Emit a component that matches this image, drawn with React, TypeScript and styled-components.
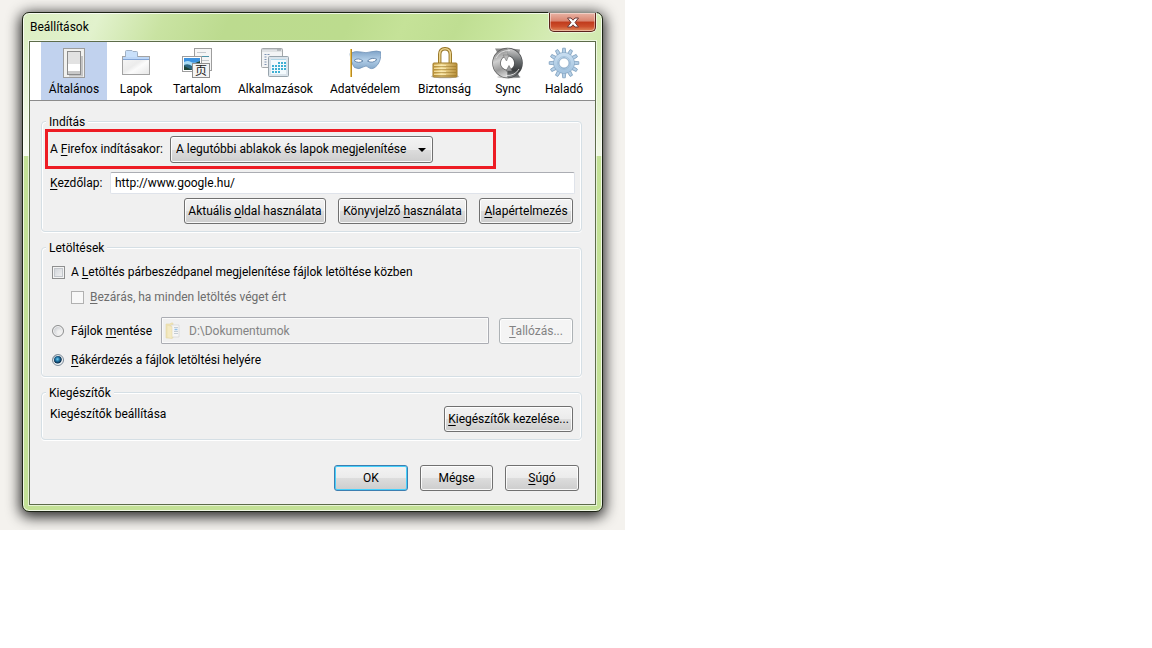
import React, { useState } from "react";
import styled, { createGlobalStyle, css } from "styled-components";

const GlobalStyle = createGlobalStyle`
  *, *::before, *::after { box-sizing: border-box; }
  body {
    margin: 0;
    background: #fff;
    color: #000;
    font: 12px/16px Roboto, "Noto Sans", sans-serif;
  }
  button, input, select { font: inherit; color: inherit; }
  u { text-underline-offset: 2px; }
`;

const Desktop = styled.main`
  width: 100%;
  max-width: 625px;
  padding: 12px 22px 18px;
  background: #f4f2ee;
  overflow: hidden;
`;

const Window = styled.section`
  padding: 0 6px 6px;
  border: 1px solid #1d2416;
  border-radius: 7px;
  background:
    linear-gradient(to bottom, transparent 28px, rgba(255, 255, 255, 0.7) 143px, transparent 143px),
    linear-gradient(115deg, #dcefc2 0, #e2f2cd 70px, #c9e3a2 130px, #bcdb8f 190px, #bcdc8e 300px, #c5e298 350px, #bfde92 400px, #c8e59e 440px, #d8edba 500px, #cde7a8 560px) top / 100% 143px no-repeat,
    #c3e196;
  box-shadow:
    inset 0 0 0 1px rgba(255, 255, 255, 0.75),
    0 3px 14px 2px rgba(0, 0, 0, 0.85);
`;

const TitleBar = styled.header`
  display: flex;
  align-items: flex-start;
  justify-content: space-between;
  height: 28px;
  padding-left: 1px;
`;

const Title = styled.h1`
  margin: 6px 0 0;
  font-size: 12px;
  font-weight: 400;
  line-height: 16px;
`;

const CloseButton = styled.button`
  display: grid;
  place-items: center;
  width: 47px;
  height: 19px;
  padding: 0;
  border: 1px solid #5b211b;
  border-top: 0;
  border-radius: 0 0 5px 5px;
  background: linear-gradient(#e9b3a4 0, #d98570 45%, #c03a1c 50%, #cc4f2c 75%, #e08a5c 100%);
  box-shadow: inset 0 0 0 1px rgba(255, 255, 255, 0.4), 0 0 0 1px rgba(255, 255, 255, 0.5);
`;

const Client = styled.div`
  border: 1px solid #5d6c4a;
  outline: 1px solid rgba(255, 255, 255, 0.6);
  background: #f0f0f0;
`;

const Toolbar = styled.nav`
  display: grid;
  grid-template-columns: 66fr 58fr 64fr 93fr 86fr 73fr 54fr 58fr;
  padding: 0 2px 0 11px;
  border-bottom: 1px solid #8c8c8c;
  background: #fff;
`;

const Tab = styled.button<{ $active?: boolean }>`
  display: flex;
  flex-direction: column;
  align-items: center;
  gap: 2px;
  height: 58px;
  padding: 5px 0 0;
  border: 0;
  white-space: nowrap;
  background: ${(p) => (p.$active ? "#c1d2ee" : "transparent")};
`;

const Pane = styled.form`
  padding: 12px 13px 13px 11px;
`;

const Group = styled.fieldset`
  min-width: 0;
  margin: 0 0 7px;
  padding: 0 6px 7px 3px;
  border: 1px solid #d5dfe5;
  border-radius: 4px;
  box-shadow: inset 1px 1px 0 #fff, inset -1px 0 0 #fff, 0 1px 0 #fff;
`;

const DownloadsGroup = styled(Group)`
  padding-bottom: 8px;
`;

const Legend = styled.legend`
  margin: 0 0 0 1px;
  padding: 1px 3px 0;
  line-height: 16px;
  background: #f0f0f0;
`;

const HighlightedRow = styled.div`
  display: flex;
  align-items: center;
  gap: 8px;
  width: 451px;
  max-width: 100%;
  height: 40px;
  margin-top: -1px;
  padding-left: 2px;
  border: 3px solid #ed1c24;
`;

const StartupLabel = styled.label`
  width: 112px;
  white-space: nowrap;
`;

const buttonFace = css`
  border: 1px solid #707070;
  border-radius: 3px;
  background: linear-gradient(#f3f3f3 0, #ebebeb 50%, #dddddd 50%, #cdcdcd 100%);
  box-shadow: inset 0 0 0 1px rgba(255, 255, 255, 0.85);
`;

const SelectWrap = styled.span`
  position: relative;
  display: inline-flex;
  width: 263px;
`;

const Select = styled.select`
  ${buttonFace}
  appearance: none;
  width: 100%;
  height: 27px;
  padding: 0 20px 0 5px;
`;

const SelectArrow = styled.svg`
  position: absolute;
  right: 7px;
  top: 12px;
  pointer-events: none;
`;

const HomeRow = styled.div`
  display: flex;
  align-items: center;
  margin-top: 3px;
  padding-left: 5px;
`;

const HomeLabel = styled.label`
  width: 60px;
`;

const TextBox = styled.input`
  flex: 1;
  min-width: 0;
  height: 22px;
  padding: 0 4px;
  border: 1px solid #dfe3ea;
  border-top-color: #abadb3;
  border-radius: 2px;
  background: #fff;
`;

const ButtonRow = styled.div`
  display: flex;
  justify-content: flex-end;
  gap: 12px;
  margin-top: 4px;
  padding-right: 2px;
`;

const Button = styled.button<{ $width: number; $primary?: boolean }>`
  ${buttonFace}
  flex: none;
  width: ${(p) => p.$width}px;
  height: 26px;
  padding: 0;
  white-space: nowrap;
  ${(p) =>
    p.$primary &&
    css`
      border-color: #3c7fb1;
      box-shadow: inset 0 0 0 1px #46d0fb;
    `}
  &:disabled {
    border-color: #adb2b5;
    background: #f4f4f4;
    color: #838383;
  }
`;

const OptionRow = styled.div<{ $gap: number; $indent?: boolean; $disabled?: boolean }>`
  display: flex;
  align-items: center;
  gap: 6px;
  margin-top: ${(p) => p.$gap}px;
  padding-left: ${(p) => (p.$indent ? 26 : 7)}px;
  padding-right: 2px;
  color: ${(p) => (p.$disabled ? "#6d6d6d" : "inherit")};
`;

const CheckBox = styled.input.attrs({ type: "checkbox" })`
  appearance: none;
  flex: none;
  width: 13px;
  height: 13px;
  margin: 0;
  border: 1px solid #8e8f8f;
  background: linear-gradient(135deg, #cbcfd5, #f6f6f6) padding-box;
  box-shadow: inset 0 0 0 1px #f4f4f4, inset 0 0 0 2px #c3c7cc;
  &:checked { background: #2a6f9e; }
  &:disabled {
    border-color: #b1b1b1;
    background: #f8f8f8;
    box-shadow: none;
  }
`;

const Radio = styled.input.attrs({ type: "radio" })`
  appearance: none;
  flex: none;
  width: 12px;
  height: 12px;
  margin: 0 1px 0 0;
  border: 1px solid #8e8f8f;
  border-radius: 50%;
  background: radial-gradient(circle at 65% 65%, #f0f0f0 20%, #b4b9c0 100%);
  box-shadow: inset 0 0 0 1px #f4f4f4;
  &:checked {
    border-color: #7d8b98;
    background: radial-gradient(circle at 45% 42%, #6fd0f5 0, #1b6b9b 28%, #0c2f4e 48%, #e4ebf0 60%);
  }
`;

const SaveLabel = styled.label`
  width: 84px;
  white-space: nowrap;
`;

const PathField = styled.div`
  display: flex;
  flex: 1;
  align-items: center;
  gap: 8px;
  min-width: 0;
  height: 27px;
  margin-right: 4px;
  padding-left: 3px;
  border: 1px solid #abadb3;
  border-radius: 1px;
  box-shadow: inset 0 0 0 1px #fafafa;
`;

const PathInput = styled.input`
  flex: 1;
  min-width: 0;
  padding: 0;
  border: 0;
  background: transparent;
  color: #838383;
`;

const AddonsRow = styled.div`
  display: flex;
  align-items: flex-start;
  justify-content: space-between;
  margin-top: 5px;
  padding: 0 2px 0 5px;
`;

const DialogButtons = styled.footer`
  display: flex;
  justify-content: flex-end;
  gap: 12px;
  margin-top: 25px;
  padding-right: 3px;
`;

const Icon = ({ children }: { children: React.ReactNode }) => (
  <svg width="32" height="32" viewBox="0 0 32 32" aria-hidden="true">
    {children}
  </svg>
);

const GeneralIcon = () => (
  <Icon>
    <rect x="5.5" y="1.5" width="21" height="29" fill="#f1f1ef" stroke="#9c9c9c" />
    <path d="M11 28.5h13V9" fill="none" stroke="#c4c4c4" strokeWidth="2" />
    <rect x="9.5" y="4.5" width="13" height="23" fill="#e2e2e2" stroke="#8b8b8b" />
    <path d="M10 17h12v7H10z" fill="#fff" />
    <path d="M10 24h12v3H10z" fill="#c9c9c9" />
  </Icon>
);

const TabsIcon = () => (
  <Icon>
    <defs>
      <linearGradient id="page" x1="0" y1="0" x2="1" y2="1">
        <stop offset="0" stopColor="#f8f8f8" />
        <stop offset=".45" stopColor="#ececec" />
        <stop offset=".6" stopColor="#fbfbfb" />
        <stop offset="1" stopColor="#e6e6e6" />
      </linearGradient>
    </defs>
    <rect x="2.5" y="9.5" width="27" height="18" fill="url(#page)" stroke="#a3a3a3" />
    <path d="M5.5 12V4.5q0-1 1-1h5.5l1 1h3.5q1 0 1 1V12z" fill="#c9e0fa" stroke="#9fb0c4" />
    <path d="M3 10h26v2.5H3z" fill="#bdd7f7" />
    <path d="M3 12.5h26" stroke="#83a5d6" />
  </Icon>
);

const ContentIcon = () => (
  <Icon>
    <rect x="13.5" y="1.5" width="17" height="22" fill="#f5f5f5" stroke="#9d9d9d" />
    <path d="M16 5.5h9M16 13.5h12M20 17.5h8" stroke="#c4c8cc" />
    <path d="M16 9.5h12" stroke="#4c93a8" />
    <rect x="1.5" y="9.5" width="19" height="15" fill="#fff" stroke="#9d9d9d" />
    <path d="M3 11h16v12H3z" fill="#3c92e0" />
    <path d="M3 15q4-2 7 0t9-1v5H3z" fill="#a9dcf5" />
    <path d="M3 18q4-2 8 1l8-2v6H3z" fill="#2c6680" />
    <path d="M3 19l8 4H3zM14 16l5-2v5z" fill="#1c4335" />
    <rect x="11.5" y="16.5" width="17" height="14" fill="#f4f4f4" stroke="#8f8f8f" />
    <text x="20" y="28" fontSize="12" textAnchor="middle" fontFamily="'Noto Sans CJK SC', sans-serif" fill="#222">
      页
    </text>
  </Icon>
);

const AppsIcon = () => (
  <Icon>
    <rect x="1.5" y="1.5" width="21" height="19" rx="1" fill="#f3f4f5" stroke="#a4a8aa" />
    <path d="M2 2.5h20M2 4h20" stroke="#cdd1d4" />
    <path d="M17 3h4" stroke="#8e9498" />
    <path d="M4.5 7.5h6M4.5 10h3M4.5 12.5h3M4.5 15h3M4.5 17.5h3" stroke="#7f95b3" strokeDasharray="2 1" />
    <rect x="8.5" y="9.5" width="20" height="20" rx="1" fill="#dbe4eb" stroke="#98a4ac" />
    <path d="M11 12h15v15H11z" fill="#f4fafd" />
    <path d="M11 12.5h15" stroke="#b2d7e8" />
    <path d="M18 16h8M12 19h14M12 22h14M12 25h9" stroke="#3fafd3" strokeWidth="2" strokeDasharray="2 1" />
  </Icon>
);

const MaskIcon = () => (
  <Icon>
    <defs>
      <linearGradient id="mask" x1="0" y1="0" x2="0" y2="1">
        <stop offset="0" stopColor="#7fa3c8" />
        <stop offset=".5" stopColor="#b3cfe8" />
        <stop offset="1" stopColor="#86a9cb" />
      </linearGradient>
    </defs>
    <path
      d="M1 6.5Q6 3.5 12 5Q17 6.5 22 4.8Q28 3.2 32 5Q32 14 28 18.5Q24 23 20.5 21Q17 17.5 14 20Q10 23 5.5 20.5Q2 16 1 6.5Z"
      fill="url(#mask)"
      stroke="#6d91b6"
      strokeWidth=".8"
    />
    <path d="M5 13.500Q9 10 14 14Q9.500 17 5 13.500ZM18.500 14Q23 9.500 28 12.500Q23.500 17 18.500 14Z" fill="#fff" stroke="#5b7ea5" strokeWidth=".9" />
    <path d="M2 2v28" stroke="#b98a22" strokeWidth="2" />
    <path d="M1.5 2v28" stroke="#ecc65e" />
  </Icon>
);

const LockIcon = () => (
  <Icon>
    <defs>
      <linearGradient id="brass" x1="0" y1="0" x2="1" y2="0">
        <stop offset="0" stopColor="#cfa64a" />
        <stop offset=".35" stopColor="#f3dd98" />
        <stop offset="1" stopColor="#b88f3a" />
      </linearGradient>
    </defs>
    <ellipse cx="16" cy="29.5" rx="14" ry="1.8" fill="#bdbdbd" />
    <path d="M10.7 17V7.5Q10.7 1.8 16 1.8T21.3 7.5V17" fill="none" stroke="#93701f" strokeWidth="3.4" />
    <path d="M10.7 17V7.5Q10.7 1.8 16 1.8T21.3 7.5V17" fill="none" stroke="#ead28c" strokeWidth="1.6" />
    <rect x="4" y="16" width="24" height="14" rx="1" fill="url(#brass)" stroke="#a07b28" />
    <path d="M5 19.5h22M5 22.5h22M5 25.5h22M5 28.5h22" stroke="#8f6a1d" strokeOpacity=".45" />
    <path d="M5 18.5h12M5 21.5h12M5 24.5h12M5 27.5h12" stroke="#fff2bf" strokeOpacity=".6" />
  </Icon>
);

const SyncIcon = () => (
  <Icon>
    <defs>
      <linearGradient id="steelLight" gradientUnits="userSpaceOnUse" x1="4" y1="2" x2="14" y2="30">
        <stop offset="0" stopColor="#777" />
        <stop offset=".4" stopColor="#cfcfcf" />
        <stop offset=".7" stopColor="#9a9a9a" />
        <stop offset="1" stopColor="#dedede" />
      </linearGradient>
      <linearGradient id="steelDark" gradientUnits="userSpaceOnUse" x1="22" y1="3" x2="20" y2="30">
        <stop offset="0" stopColor="#c4c4c4" />
        <stop offset=".4" stopColor="#6a6e70" />
        <stop offset=".75" stopColor="#393c3e" />
        <stop offset="1" stopColor="#828587" />
      </linearGradient>
    </defs>
    <ellipse cx="17" cy="30" rx="12" ry="1.5" fill="#c9c9c9" />
    <path d="M3 1.500H12L6 7ZM19 1.500L28 2.500L27 8Z" fill="#8c8c8c" />
    <path d="M28 30.500H19L25 25Z" fill="#6f7274" />
    <path d="M15.500 5A11 11 0 0 0 15.500 27" fill="none" stroke="#5e5e5e" strokeWidth="8.600" />
    <path d="M15.500 5A11 11 0 0 1 15.500 27" fill="none" stroke="#4b4d4f" strokeWidth="8.600" />
    <path d="M15.500 5A11 11 0 0 0 15.500 27" fill="none" stroke="url(#steelLight)" strokeWidth="7.200" />
    <path d="M15.500 5A11 11 0 0 1 15.500 27" fill="none" stroke="url(#steelDark)" strokeWidth="7.200" />
    <path d="M11 8L14.500 14L17 8Z" fill="#b9b9b9" stroke="#777" strokeWidth=".6" />
    <path d="M20 24L17 18.500L14 24Z" fill="#9a9c9e" stroke="#666" strokeWidth=".6" />
    <path d="M4 11Q8 3 18 3.500M27 22Q23 29 14 28.500" fill="none" stroke="#e4e4e4" strokeWidth=".9" />
  </Icon>
);

const GEAR_TEETH = Array.from({ length: 12 }, (_, i) => i * 30);

const GearIcon = () => (
  <Icon>
    <defs>
      <linearGradient id="gear" x1="0" y1="0" x2="0" y2="1">
        <stop offset="0" stopColor="#c6dcef" />
        <stop offset="1" stopColor="#a6c5e0" />
      </linearGradient>
    </defs>
    {GEAR_TEETH.map((angle) => (
      <path
        key={angle}
        d="M14.200 7L14.700 1.200H17.300L17.800 7Z"
        fill="#b5cfe6"
        stroke="#7e9fbe"
        strokeWidth=".8"
        transform={`rotate(${angle} 16 16)`}
      />
    ))}
    <circle cx="16" cy="16" r="7.8" fill="none" stroke="#86a6c4" strokeWidth="5.8" />
    <circle cx="16" cy="16" r="7.8" fill="none" stroke="url(#gear)" strokeWidth="4.8" />
    <circle cx="16" cy="16" r="6.4" fill="none" stroke="#98b7d3" strokeWidth=".7" />
    <circle cx="16" cy="16" r="5" fill="#fff" stroke="#86a6c4" strokeWidth=".8" />
  </Icon>
);

const FolderIcon = () => (
  <svg width="16" height="18" viewBox="0 0 16 18" aria-hidden="true" opacity=".6">
    <path d="M1 2h4l1-1h2v15H1z" fill="#f1dc8c" stroke="#e3cc7c" strokeWidth=".6" />
    <path d="M6 3h8v12H6z" fill="#fafafa" stroke="#bdbdbd" strokeWidth=".6" />
    <path d="M9 5.5h4M9 9.5h4M9 11.5h4" stroke="#a9b6c2" />
    <path d="M9.5 7.5h3" stroke="#4fa3ea" strokeWidth="1.5" />
    <path d="M2 3l5 1.5v12L2 15.5z" fill="#f7e7a6" stroke="#e3cc7c" strokeWidth=".6" />
  </svg>
);

const TABS = [
  { name: "Általános", icon: GeneralIcon },
  { name: "Lapok", icon: TabsIcon },
  { name: "Tartalom", icon: ContentIcon },
  { name: "Alkalmazások", icon: AppsIcon },
  { name: "Adatvédelem", icon: MaskIcon },
  { name: "Biztonság", icon: LockIcon },
  { name: "Sync", icon: SyncIcon },
  { name: "Haladó", icon: GearIcon },
];

export default function App() {
  const [tab, setTab] = useState("Általános");

  return (
    <>
      <GlobalStyle />
      <Desktop>
        <Window aria-labelledby="dialog-title">
          <TitleBar>
            <Title id="dialog-title">Beállítások</Title>
            <CloseButton type="button" aria-label="Bezárás">
              <svg width="14" height="11" viewBox="0 0 14 11" aria-hidden="true">
                <path
                  d="M1.500 1h3.500l2 2.200L9 1h3.500L9 5.500l3.500 4.500H9L7 7.800 5 10H1.500L5 5.500z"
                  fill="#fff"
                  stroke="#6b3a38"
                />
              </svg>
            </CloseButton>
          </TitleBar>

          <Client>
            <Toolbar>
              {TABS.map(({ name, icon: TabIcon }) => (
                <Tab key={name} type="button" $active={name === tab} onClick={() => setTab(name)}>
                  <TabIcon />
                  {name}
                </Tab>
              ))}
            </Toolbar>

            <Pane onSubmit={(e) => e.preventDefault()}>
              <Group>
                <Legend>Indítás</Legend>
                <HighlightedRow>
                  <StartupLabel htmlFor="startup">
                    A <u>F</u>irefox indításakor:
                  </StartupLabel>
                  <SelectWrap>
                    <Select id="startup">
                      <option>A legutóbbi ablakok és lapok megjelenítése</option>
                    </Select>
                    <SelectArrow width="8" height="4" viewBox="0 0 8 4" aria-hidden="true">
                      <path d="M0 0h8L4 4z" />
                    </SelectArrow>
                  </SelectWrap>
                </HighlightedRow>
                <HomeRow>
                  <HomeLabel htmlFor="home">
                    <u>K</u>ezdőlap:
                  </HomeLabel>
                  <TextBox id="home" type="text" defaultValue="http://www.google.hu/" />
                </HomeRow>
                <ButtonRow>
                  <Button type="button" $width={142}>
                    Aktuális <u>o</u>ldal használata
                  </Button>
                  <Button type="button" $width={129}>
                    Könyvjelző <u>h</u>asználata
                  </Button>
                  <Button type="button" $width={94}>
                    <u>A</u>lapértelmezés
                  </Button>
                </ButtonRow>
              </Group>

              <DownloadsGroup>
                <Legend>Letöltések</Legend>
                <OptionRow $gap={8}>
                  <CheckBox id="show-panel" />
                  <label htmlFor="show-panel">
                    A <u>L</u>etöltés párbeszédpanel megjelenítése fájlok letöltése közben
                  </label>
                </OptionRow>
                <OptionRow $gap={9} $indent $disabled>
                  <CheckBox id="auto-close" disabled />
                  <label htmlFor="auto-close">
                    <u>B</u>ezárás, ha minden letöltés véget ért
                  </label>
                </OptionRow>
                <OptionRow $gap={12}>
                  <Radio id="save-to" name="destination" />
                  <SaveLabel htmlFor="save-to">
                    Fájlok <u>m</u>entése
                  </SaveLabel>
                  <PathField>
                    <FolderIcon />
                    <PathInput type="text" aria-label="Letöltési mappa" value="D:\Dokumentumok" disabled readOnly />
                  </PathField>
                  <Button type="button" $width={74} disabled>
                    <u>T</u>allózás...
                  </Button>
                </OptionRow>
                <OptionRow $gap={8}>
                  <Radio id="ask" name="destination" defaultChecked />
                  <label htmlFor="ask">
                    <u>R</u>ákérdezés a fájlok letöltési helyére
                  </label>
                </OptionRow>
              </DownloadsGroup>

              <Group>
                <Legend>Kiegészítők</Legend>
                <AddonsRow>
                  <span>Kiegészítők beállítása</span>
                  <Button type="button" $width={129}>
                    <u>K</u>iegészítők kezelése...
                  </Button>
                </AddonsRow>
              </Group>

              <DialogButtons>
                <Button type="submit" $width={74} $primary>
                  OK
                </Button>
                <Button type="button" $width={73}>
                  Mégse
                </Button>
                <Button type="button" $width={74}>
                  <u>S</u>úgó
                </Button>
              </DialogButtons>
            </Pane>
          </Client>
        </Window>
      </Desktop>
    </>
  );
}
